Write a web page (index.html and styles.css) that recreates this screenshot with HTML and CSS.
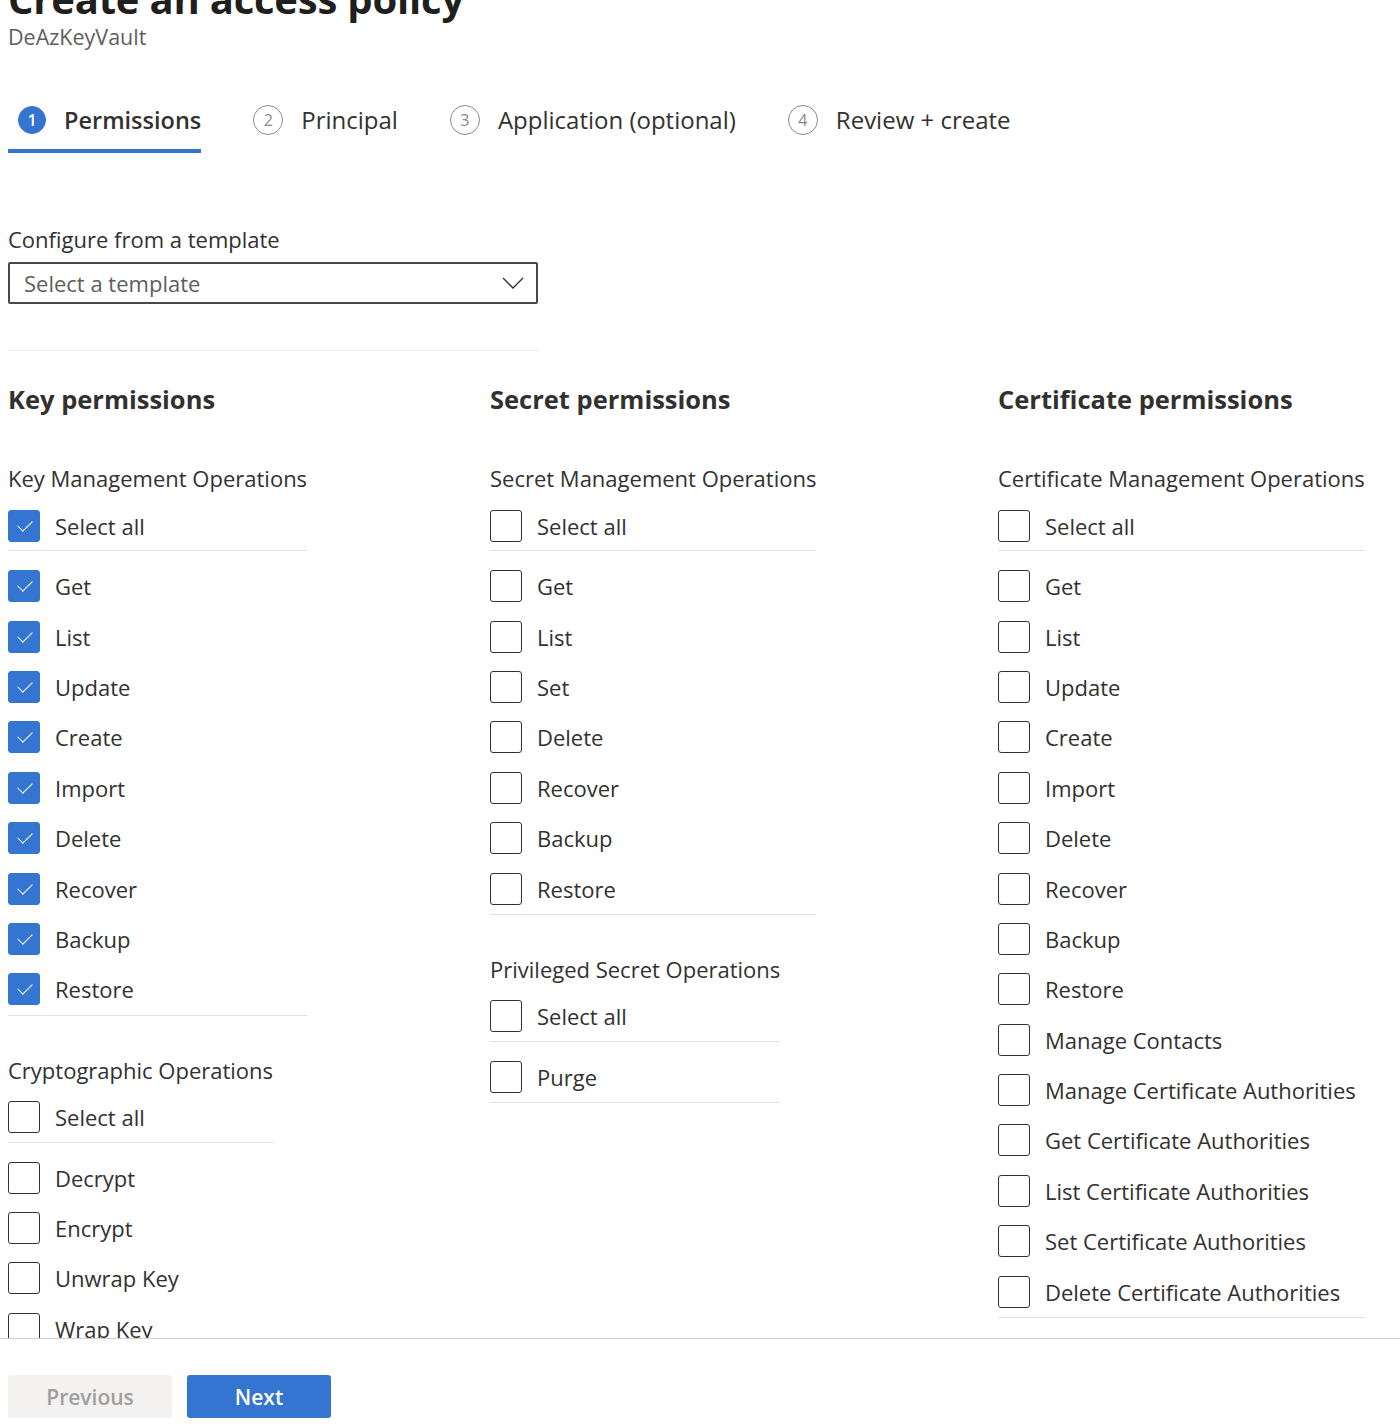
FILE: index.html
```html
<!DOCTYPE html>
<html lang="en">
<head>
<meta charset="utf-8">
<title>Create an access policy</title>
<link rel="stylesheet" href="styles.css">
</head>
<body>
<div class="page">
  <div class="content">
    <header class="head">
      <h1 class="title">Create an access policy</h1>
      <div class="subtitle">DeAzKeyVault</div>
    </header>

    <nav class="steps">
      <div class="step active"><span class="num">1</span><span class="step-label">Permissions</span></div>
      <div class="step"><span class="num">2</span><span class="step-label">Principal</span></div>
      <div class="step"><span class="num">3</span><span class="step-label">Application (optional)</span></div>
      <div class="step"><span class="num">4</span><span class="step-label">Review + create</span></div>
    </nav>

    <section class="template">
      <div class="field-label">Configure from a template</div>
      <div class="dropdown">
        <span class="placeholder">Select a template</span>
        <svg class="chev" width="22" height="12" viewBox="0 0 22 12"><path d="M1 1 L11 11 L21 1" fill="none" stroke="#323130" stroke-width="1.4"/></svg>
      </div>
      <div class="sep"></div>
    </section>

    <div class="columns">
      <div class="col">
        <h2 class="col-title">Key permissions</h2>
        <div class="group">
          <div class="group-title">Key Management Operations</div>
          <div class="row all"><span class="cb on"></span>Select all</div>
          <div class="list">
            <div class="row"><span class="cb on"></span>Get</div>
            <div class="row"><span class="cb on"></span>List</div>
            <div class="row"><span class="cb on"></span>Update</div>
            <div class="row"><span class="cb on"></span>Create</div>
            <div class="row"><span class="cb on"></span>Import</div>
            <div class="row"><span class="cb on"></span>Delete</div>
            <div class="row"><span class="cb on"></span>Recover</div>
            <div class="row"><span class="cb on"></span>Backup</div>
            <div class="row"><span class="cb on"></span>Restore</div>
          </div>
        </div>
        <div class="group">
          <div class="group-title">Cryptographic Operations</div>
          <div class="row all"><span class="cb"></span>Select all</div>
          <div class="list">
            <div class="row"><span class="cb"></span>Decrypt</div>
            <div class="row"><span class="cb"></span>Encrypt</div>
            <div class="row"><span class="cb"></span>Unwrap Key</div>
            <div class="row"><span class="cb"></span>Wrap Key</div>
            <div class="row"><span class="cb"></span>Verify</div>
            <div class="row"><span class="cb"></span>Sign</div>
          </div>
        </div>
      </div>

      <div class="col">
        <h2 class="col-title">Secret permissions</h2>
        <div class="group">
          <div class="group-title">Secret Management Operations</div>
          <div class="row all"><span class="cb"></span>Select all</div>
          <div class="list">
            <div class="row"><span class="cb"></span>Get</div>
            <div class="row"><span class="cb"></span>List</div>
            <div class="row"><span class="cb"></span>Set</div>
            <div class="row"><span class="cb"></span>Delete</div>
            <div class="row"><span class="cb"></span>Recover</div>
            <div class="row"><span class="cb"></span>Backup</div>
            <div class="row"><span class="cb"></span>Restore</div>
          </div>
        </div>
        <div class="group">
          <div class="group-title">Privileged Secret Operations</div>
          <div class="row all"><span class="cb"></span>Select all</div>
          <div class="list">
            <div class="row"><span class="cb"></span>Purge</div>
          </div>
        </div>
      </div>

      <div class="col">
        <h2 class="col-title">Certificate permissions</h2>
        <div class="group">
          <div class="group-title">Certificate Management Operations</div>
          <div class="row all"><span class="cb"></span>Select all</div>
          <div class="list">
            <div class="row"><span class="cb"></span>Get</div>
            <div class="row"><span class="cb"></span>List</div>
            <div class="row"><span class="cb"></span>Update</div>
            <div class="row"><span class="cb"></span>Create</div>
            <div class="row"><span class="cb"></span>Import</div>
            <div class="row"><span class="cb"></span>Delete</div>
            <div class="row"><span class="cb"></span>Recover</div>
            <div class="row"><span class="cb"></span>Backup</div>
            <div class="row"><span class="cb"></span>Restore</div>
            <div class="row"><span class="cb"></span>Manage Contacts</div>
            <div class="row"><span class="cb"></span>Manage Certificate Authorities</div>
            <div class="row"><span class="cb"></span>Get Certificate Authorities</div>
            <div class="row"><span class="cb"></span>List Certificate Authorities</div>
            <div class="row"><span class="cb"></span>Set Certificate Authorities</div>
            <div class="row"><span class="cb"></span>Delete Certificate Authorities</div>
          </div>
        </div>
      </div>
    </div>
  </div>

  <footer class="footer">
    <button class="btn prev" type="button">Previous</button>
    <button class="btn next" type="button">Next</button>
  </footer>
</div>
</body>
</html>
```

FILE: styles.css
```css
* { box-sizing: border-box; }

html, body {
  margin: 0;
  padding: 0;
  background: #ffffff;
}

body {
  font-family: "Open Sans", "Noto Sans", "Liberation Sans", sans-serif;
  color: #323130;
}

.page {
  height: 1424px;
  display: flex;
  flex-direction: column;
  overflow: hidden;
}

.content {
  height: 1338px;
  overflow: hidden;
  padding: 0 8px;
  flex: none;
}

/* Header */
.head {
  margin-top: -25px;
}

.title {
  margin: 0;
  font-size: 40px;
  line-height: 48px;
  font-weight: 700;
  color: #201f1e;
  letter-spacing: -0.2px;
}

.subtitle {
  font-size: 21.5px;
  line-height: 28px;
  color: #605e5c;
}

/* Steps */
.steps {
  display: flex;
  gap: 42px;
  margin-top: 52px;
}

.step {
  display: flex;
  align-items: center;
  gap: 18px;
  padding: 0 0 12px 10px;
  border-bottom: 4px solid transparent;
}

.step.active {
  border-bottom-color: #3375d0;
}

.num {
  width: 30px;
  height: 30px;
  border-radius: 50%;
  border: 1px solid #8a8886;
  color: #8a8886;
  font-size: 16px;
  display: flex;
  align-items: center;
  justify-content: center;
  flex: none;
}

.step.active .num {
  width: 28px;
  height: 28px;
  background: #3375d0;
  border-color: #3375d0;
  color: #ffffff;
  font-weight: 600;
}

.step-label {
  font-size: 24px;
  line-height: 34px;
  color: #323130;
}

.step.active .step-label {
  font-weight: 600;
  font-size: 23.5px;
}

/* Template */
.template {
  margin-top: 71px;
  width: 530px;
}

.field-label {
  font-size: 22px;
  line-height: 30px;
}

.dropdown {
  margin-top: 8px;
  height: 42px;
  border: 2px solid #4a4847;
  border-radius: 2px;
  display: flex;
  align-items: center;
  justify-content: space-between;
  padding: 0 12px 0 14px;
}

.placeholder {
  font-size: 22px;
  color: #605e5c;
}

.sep {
  margin-top: 46px;
  height: 1px;
  background: #edebe9;
}

/* Columns */
.columns {
  margin-top: 30px;
  display: grid;
  grid-template-columns: 482px 508px auto;
  align-items: start;
}

.col-title {
  margin: 0;
  font-size: 25.5px;
  line-height: 36px;
  font-weight: 700;
  color: #323130;
}

.group {
  width: max-content;
  margin-top: 39px;
}

.col-title + .group {
  margin-top: 46px;
}

.group-title {
  font-size: 22px;
  line-height: 30px;
}

.row {
  display: flex;
  align-items: center;
  gap: 15px;
  height: 50.4px;
  font-size: 22px;
}

.row.all {
  margin-top: 9px;
  height: 49px;
  padding-bottom: 1px;
  border-bottom: 1px solid #e1dfdd;
}

.list {
  padding-top: 10px;
  border-bottom: 1px solid #e1dfdd;
}

.cb {
  width: 32px;
  height: 32px;
  border: 1px solid #323130;
  border-radius: 3px;
  flex: none;
  position: relative;
}

.cb.on {
  background: #3375d0;
  border-color: #3375d0;
}

.cb.on::after {
  content: "";
  position: absolute;
  left: 9px;
  top: 9px;
  width: 13px;
  height: 7px;
  border-left: 1.5px solid #ffffff;
  border-bottom: 1.5px solid #ffffff;
  transform: rotate(-45deg);
  transform-origin: center;
}

/* Footer */
.footer {
  flex: none;
  height: 86px;
  border-top: 1px solid #d2d0ce;
  display: flex;
  gap: 15px;
  padding: 36px 8px 0;
  align-items: flex-start;
}

.btn {
  height: 43px;
  border: none;
  border-radius: 3px;
  font-family: "Open Sans", "Noto Sans", sans-serif;
  font-size: 21px;
  font-weight: 600;
}

.btn.prev {
  width: 164px;
  background: #f3f2f1;
  color: #a19f9d;
}

.btn.next {
  width: 144px;
  background: #3375d0;
  color: #ffffff;
}
```
